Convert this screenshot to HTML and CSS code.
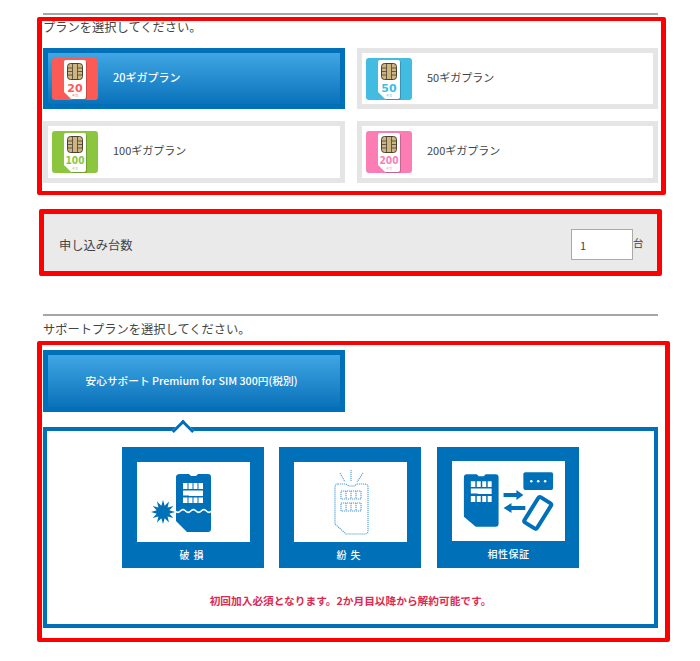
FILE: index.html
```html
<!doctype html>
<html>

<head>
  <meta charset="UTF-8">
  <meta name="viewport" content="width=device-width, initial-scale=1.0">
  <title>プラン選択</title>
  <link rel="stylesheet" href="styles.css">
</head>

<body>

  <svg class="defs" aria-hidden="true">
    <symbol id="sim" viewBox="0 0 46 42">
      <path d="M15 3H33Q35 3 35 5V40Q35 42 33 42H20L13 35V5Q13 3 15 3Z" fill="#000" opacity=".2" />
      <path d="M14 2H32Q34 2 34 4V39Q34 41 32 41H19L12 34V4Q12 2 14 2Z" fill="#fff" />
      <rect x="15.5" y="5.5" width="15" height="16" rx="3" fill="#cdb582" stroke="#4a4131" />
      <path d="M15.5 10H20.5M15.5 13.5H20.5M15.5 17H20.5M25.5 10H30.5M25.5 13.5H30.5M25.5 17H30.5M20.5 5.5V21.5M25.5 5.5V21.5" stroke="#4a4131" stroke-width=".8" fill="none" />
    </symbol>
  </svg>

  <div class="page">
    <div class="rule"></div>

    <div class="redbox plan-box">
      <p class="title">プランを選択してください。</p>
      <div class="plans">
        <div class="plan active">
          <svg class="plan-icon" viewBox="0 0 46 42" style="color:#fb5a55">
            <rect width="46" height="42" rx="3" fill="currentColor" />
            <use href="#sim" width="46" height="42" />
            <text class="num" x="23" y="33.5">20</text>
            <text class="giga" x="23" y="38.5">ギガ</text>
          </svg>
          <span>20ギガプラン</span>
        </div>
        <div class="plan">
          <svg class="plan-icon" viewBox="0 0 46 42" style="color:#43bce2">
            <rect width="46" height="42" rx="3" fill="currentColor" />
            <use href="#sim" width="46" height="42" />
            <text class="num" x="23" y="33.5">50</text>
            <text class="giga" x="23" y="38.5">ギガ</text>
          </svg>
          <span>50ギガプラン</span>
        </div>
        <div class="plan">
          <svg class="plan-icon" viewBox="0 0 46 42" style="color:#8cc63f">
            <rect width="46" height="42" rx="3" fill="currentColor" />
            <use href="#sim" width="46" height="42" />
            <text class="num num-long" x="23" y="33" textLength="19" lengthAdjust="spacingAndGlyphs">100</text>
            <text class="giga" x="23" y="38.5">ギガ</text>
          </svg>
          <span>100ギガプラン</span>
        </div>
        <div class="plan">
          <svg class="plan-icon" viewBox="0 0 46 42" style="color:#fb7db3">
            <rect width="46" height="42" rx="3" fill="currentColor" />
            <use href="#sim" width="46" height="42" />
            <text class="num num-long" x="23" y="33" textLength="19" lengthAdjust="spacingAndGlyphs">200</text>
            <text class="giga" x="23" y="38.5">ギガ</text>
          </svg>
          <span>200ギガプラン</span>
        </div>
      </div>
    </div>

    <div class="redbox count-box">
      <span>申し込み台数</span>
      <div class="count">
        <input class="count-input" value="1" />
        <span class="unit">台</span>
      </div>
    </div>

    <div class="rule rule-second"></div>
    <p class="title title-support">サポートプランを選択してください。</p>

    <div class="redbox support-box">
      <div class="plan active support-tab"><span>安心サポート Premium for SIM 300円(税別)</span></div>
      <div class="panel">
        <div class="notch"></div>
        <div class="services">

          <div class="service">
            <svg class="service-pic" viewBox="0 0 113 80">
              <path d="M43 12H52L54 14H59L61 12H71Q74 12 74 15V67Q74 70 71 70H50L39 59V15Q39 12 43 12Z" fill="#0070b8" />
              <path d="M46 21H50.5V27H46ZM51.5 21H55.5V27H51.5ZM56.5 21H60.5V27H56.5ZM61.5 21H66V27H61.5ZM46 28.5H66V34H52V33.5H46ZM46 35.5H50.5V41H46ZM51.5 35.5H55.5V41H51.5ZM56.5 35.5H60.5V41H56.5ZM61.5 35.5H66V41H61.5Z" fill="#fff" />
              <path d="M33 49q2.6-2.6 5.2 0t5.2 0t5.2 0t5.2 0t5.2 0t5.2 0t5.2 0t5.2 0" fill="none" stroke="#fff" stroke-width="1.6" />
              <polygon points="38,50 32.3,51.7 36.4,56 30.6,54.6 32,60.4 27.7,56.3 26,62 24.3,56.3 20,60.4 21.4,54.6 15.6,56 19.7,51.7 14,50 19.7,48.3 15.6,44 21.4,45.4 20,39.6 24.3,43.7 26,38 27.7,43.7 32,39.6 30.6,45.4 36.4,44 32.3,48.3" fill="#0070b8" />
            </svg>
            <span class="service-name wide">破損</span>
          </div>

          <div class="service">
            <svg class="service-pic" viewBox="0 0 113 80">
              <g fill="none" stroke="#4f9bd3" stroke-width="1.1" stroke-dasharray="1.2 .8">
                <path d="M57 8V19M46 11L51 20M69 11L63 20" />
                <path d="M44 22H52L55 24H60L63 22H71Q74 22 74 25V69Q74 72 71 72H52L41 62V25Q41 22 44 22Z" />
                <path d="M47 29H67V37H47ZM47 41H67V49H47Z" />
                <path d="M52 29V37M57 29V37M62 29V37M52 41V49M57 41V49M62 41V49" />
              </g>
            </svg>
            <span class="service-name wide">紛失</span>
          </div>

          <div class="service service-last">
            <svg class="service-pic" viewBox="0 0 114 80">
              <path d="M15 13H25L27 15H32L34 13H44Q47 13 47 16V63Q47 66 44 66H24L12 56V16Q12 13 15 13Z" fill="#0070b8" />
              <path d="M19 20H23.5V26H19ZM25 20H29V26H25ZM30.5 20H34.5V26H30.5ZM36 20H40V26H36ZM19 27.5H40V33H26V32.5H19ZM19 35H23.5V41H19ZM25 35H29V41H25ZM30.5 35H34.5V41H30.5ZM36 35H40V41H36Z" fill="#fff" />
              <path d="M52 32H65V29L72 34L65 39V36H52Z" fill="#0070b8" />
              <path d="M74 45H60V42L52 47L60 52V49H74Z" fill="#0070b8" />
              <rect x="72" y="11" width="30" height="18" rx="2" fill="#0070b8" />
              <circle cx="80" cy="20" r="1.3" fill="#fff" />
              <circle cx="87" cy="20" r="1.3" fill="#fff" />
              <circle cx="94" cy="20" r="1.3" fill="#fff" />
              <rect x="79" y="37" width="15" height="30" rx="2" fill="#fff" stroke="#0070b8" stroke-width="4" transform="rotate(32 86.5 52)" />
            </svg>
            <span class="service-name">相性保証</span>
          </div>

        </div>
        <p class="notice">初回加入必須となります。2か月目以降から解約可能です。</p>
      </div>
    </div>
  </div>

</body>

</html>
```

FILE: styles.css
```css
* {
  margin: 0;
  padding: 0;
  box-sizing: border-box;
}

body {
  background: #fff;
  color: #444;
  font-family: "Noto Sans CJK JP", "Noto Sans", sans-serif;
  font-size: 12.25px;
}

.defs {
  position: absolute;
  width: 0;
  height: 0;
}

.page {
  width: 615px;
  margin-left: 43px;
  padding-top: 13px;
}

.rule {
  height: 2px;
  background: #a6a6a6;
}

.rule-second {
  margin-top: 38px;
}

.title {
  font-size: 12.25px;
  line-height: 14px;
}

.title-support {
  margin-top: 6px;
  margin-bottom: 5px;
}

.redbox {
  border: solid #f00;
  border-width: 4px 5px;
  border-radius: 2px;
}

.plan-box {
  margin: 2px -8px 0 -6px;
  padding: 0 3px 8px 1px;
}

.plan-box .title {
  margin-top: -1px;
  margin-bottom: 14px;
}

.plans {
  display: grid;
  grid-template-columns: 302px 301px;
  grid-template-rows: 61px 62px;
  gap: 12px;
}

.plan {
  display: flex;
  align-items: center;
  gap: 15px;
  padding-left: 4px;
  border: 5px solid #e5e5e5;
  font-size: 11px;
}

.plan span {
  margin-bottom: 4px;
}

.plan.active {
  border-color: #0070b8;
  background: linear-gradient(#40a6e4, #0a72ba);
  color: #fff;
  font-weight: 500;
}

.plan-icon {
  width: 46px;
  height: 42px;
  flex-shrink: 0;
}

.num {
  fill: currentColor;
  font-family: "DejaVu Sans", sans-serif;
  font-size: 11px;
  font-weight: bold;
  text-anchor: middle;
}

.num-long {
  font-size: 10px;
}

.giga {
  fill: currentColor;
  font-size: 3px;
  text-anchor: middle;
}

.count-box {
  display: flex;
  align-items: center;
  justify-content: space-between;
  height: 67px;
  margin: 14px -4px 0 -4px;
  padding: 4px 14px 0 15px;
  border-width: 5px;
  background: #eaeaea;
}

.count {
  display: flex;
  align-items: center;
}

.count-input {
  width: 62px;
  height: 31px;
  padding-left: 8px;
  border: 1px solid #aaa;
  background: #fff;
  color: #444;
  font-family: inherit;
  font-size: 11px;
}

.unit {
  width: 10px;
  margin-bottom: 4px;
  font-size: 10.5px;
}

.support-box {
  margin: 0 -12px 0 -6px;
  padding: 5px 7px 10px 1px;
}

.support-tab {
  justify-content: center;
  width: 302px;
  height: 62px;
  padding-left: 0;
  font-size: 10.7px;
}

.support-tab span {
  margin: 0 5px 2px 0;
}

.panel {
  position: relative;
  margin-top: 15px;
  padding: 16px 0 15px;
  border: 4px solid #0070b8;
}

.notch {
  position: absolute;
  left: 128px;
  top: -8px;
  width: 16px;
  height: 16px;
  border: solid #0070b8;
  border-width: 3px 0 0 3px;
  background: #fff;
  transform: rotate(45deg);
}

.services {
  position: relative;
  display: flex;
  justify-content: center;
  gap: 15px;
}

.service {
  display: flex;
  flex-direction: column;
  width: 142px;
  height: 121px;
  padding: 15px 14px 0 15px;
  background: #0070b8;
}

.service-last {
  margin-left: 1px;
  padding-top: 14px;
}

.service-pic {
  display: block;
  width: 100%;
  height: 80px;
  background: #fff;
}

.service-name {
  flex: 1;
  color: #fff;
  font-size: 10px;
  font-weight: 500;
  line-height: 26px;
  text-align: center;
  letter-spacing: .5px;
}

.service-name.wide {
  letter-spacing: 4px;
}

.notice {
  margin-top: 25px;
  color: #dc2b4e;
  font-size: 10.7px;
  font-weight: bold;
  line-height: 16px;
  text-align: center;
}
```
